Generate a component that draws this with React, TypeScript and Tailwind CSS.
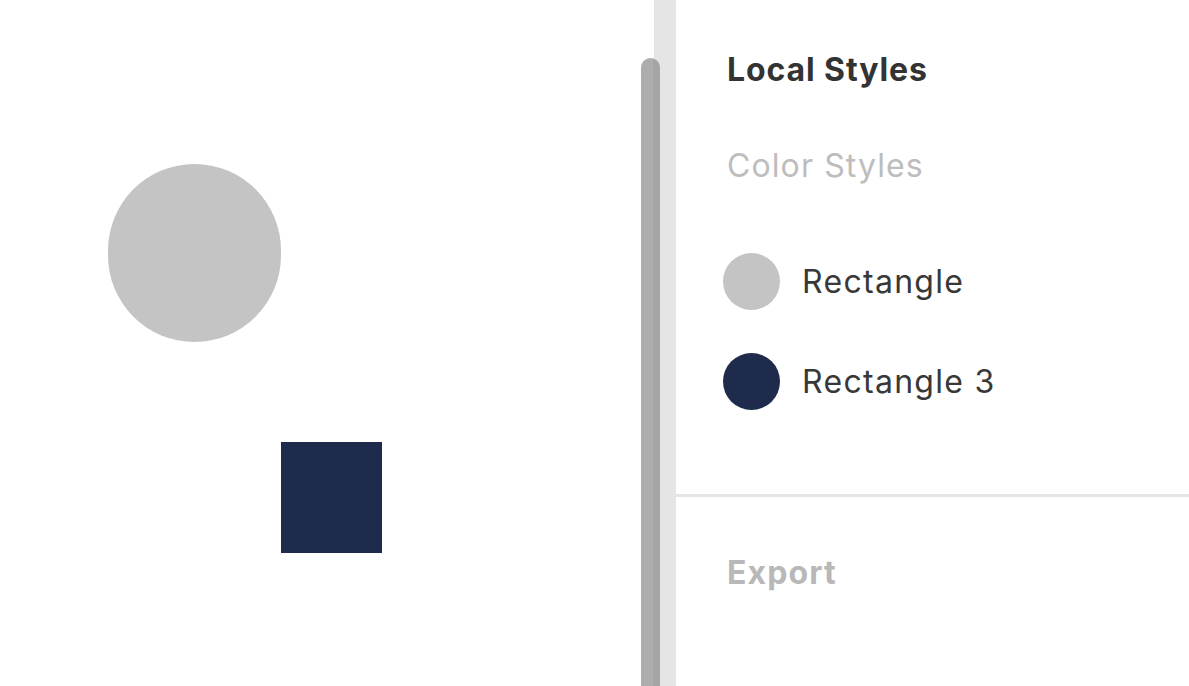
import React from "react";

export default function App() {
  return (
    <div
      className="flex h-[686px] w-[1189px] overflow-hidden bg-white"
      style={{ fontFamily: "Inter, 'Noto Sans', sans-serif" }}
    >
      {/* Canvas */}
      <div className="relative h-full w-[654px] shrink-0 bg-white">
        <div className="absolute left-[108px] top-[164px] h-[178px] w-[173px] rounded-full bg-[#c4c4c4]" />
        <div className="absolute left-[281px] top-[442px] h-[111px] w-[101px] bg-[#1f2b4c]" />
        {/* scrollbar thumb */}
        <div className="absolute left-[641px] top-[58px] z-10 flex h-[640px] w-[19px] overflow-hidden rounded-t-full">
          <div className="h-full w-[12px] bg-[#adadad]" />
          <div className="h-full w-[7px] bg-[#a5a5a5]" />
        </div>
      </div>
      {/* Gutter */}
      <div className="h-full w-[22px] shrink-0 bg-[#e5e5e5]" />
      {/* Panel */}
      <div className="flex h-full flex-1 flex-col bg-white">
        <div className="flex flex-col border-b-[3px] border-[#e5e5e5] pb-[84px] pl-[51px] pt-[50px]">
          <div className="text-[32px] font-bold leading-[40px] tracking-[0.9px] text-[#333333]">Local Styles</div>
          <div className="mt-[56px] text-[32px] leading-[40px] tracking-[1.1px] text-[#bdbdbd]">Color Styles</div>
          <div className="-ml-[4px] mt-[67px] flex flex-col gap-[43px]">
            <div className="flex items-center gap-[22px]">
              <div className="h-[57px] w-[57px] shrink-0 rounded-full bg-[#c4c4c4]" />
              <span className="text-[32px] leading-[40px] tracking-[1.3px] text-[#383838]">Rectangle</span>
            </div>
            <div className="flex items-center gap-[22px]">
              <div className="h-[57px] w-[57px] shrink-0 rounded-full bg-[#1f2b4c]" />
              <span className="text-[32px] leading-[40px] tracking-[1.3px] text-[#383838]">Rectangle 3</span>
            </div>
          </div>
        </div>
        <div className="pl-[51px] pt-[56px]">
          <div className="text-[32px] font-bold leading-[40px] tracking-[1.1px] text-[#b8b8b8]">Export</div>
        </div>
      </div>
    </div>
  );
}
